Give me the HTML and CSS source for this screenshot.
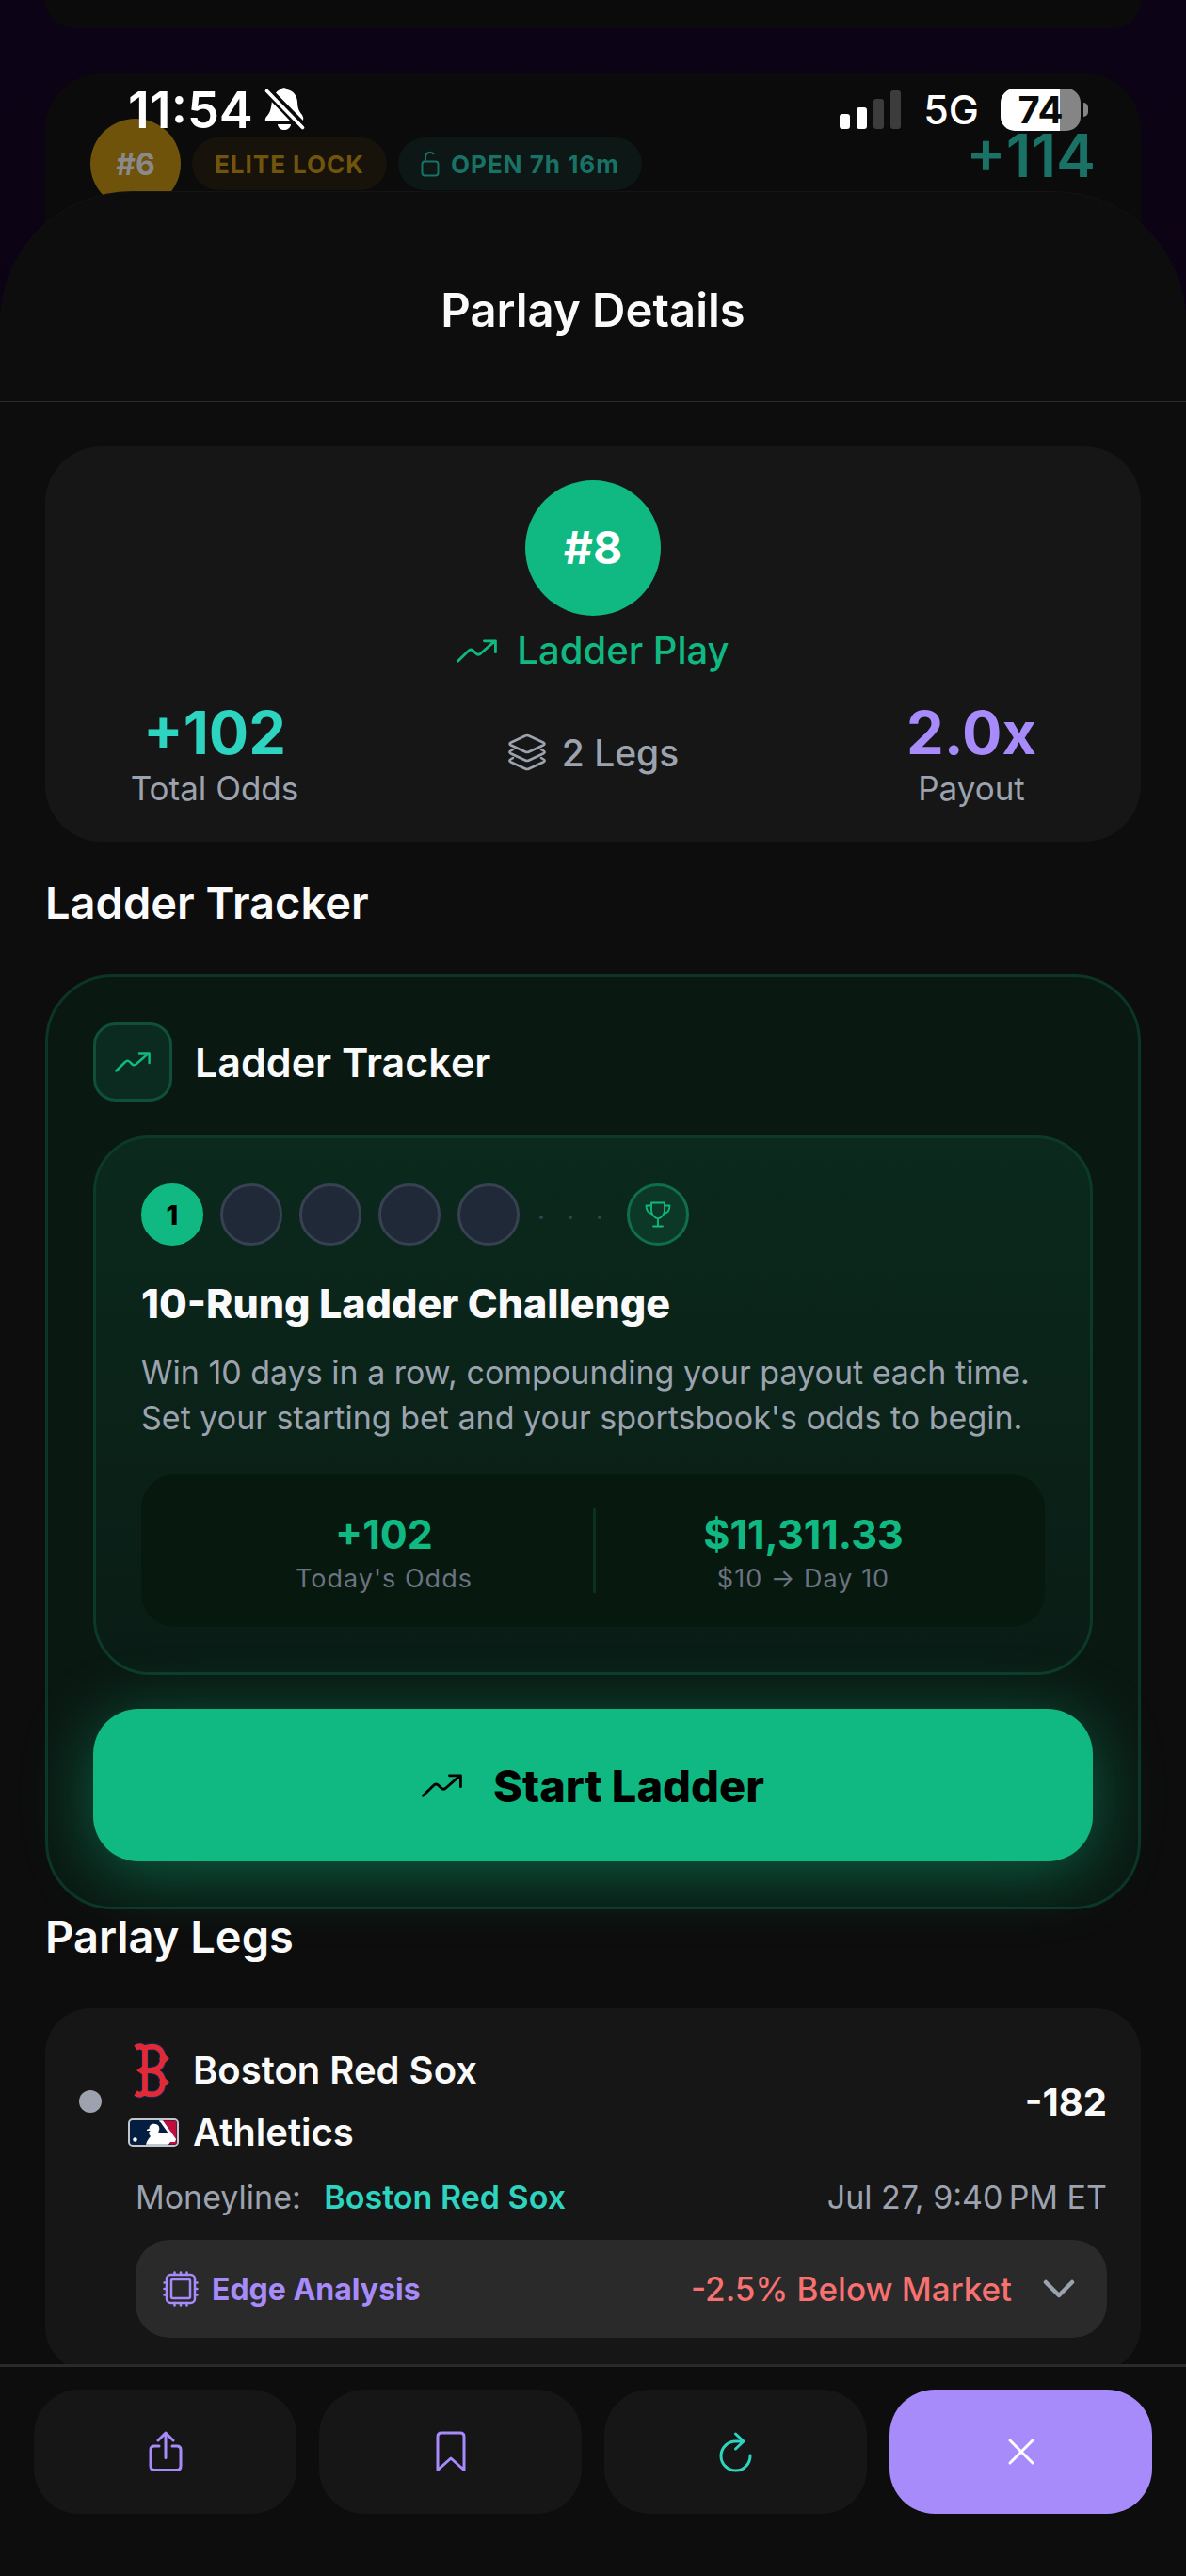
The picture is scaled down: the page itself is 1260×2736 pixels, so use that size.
FILE: index.html
```html
<!DOCTYPE html>
<html lang="en">
<head>
    <meta charset="UTF-8">
    <meta name="viewport" content="width=device-width, initial-scale=1.0">
    <title>Parlay Details</title>
    <link rel="stylesheet" href="styles.css">
</head>
<body>
    <!-- Shared icon shapes -->
    <svg class="sprite" aria-hidden="true">
        <symbol id="trend" viewBox="0 0 38 22">
            <path d="M1.3 20.5 L11 11 Q13.5 8.4 16 11 L18 13 Q20.5 15.6 23 13 L36 1.6 M26 1.6 H36.6 V12" fill="none" stroke="currentColor" stroke-width="2.5" stroke-linecap="round" stroke-linejoin="round"/>
        </symbol>
    </svg>

    <div class="app">
        <!-- Dimmed page behind the sheet -->
        <div class="backdrop">
            <div class="back-card back-card-prev"></div>
            <div class="back-card back-card-next">
                <span class="back-rank">#6</span>
                <span class="pill pill-gold">ELITE LOCK</span>
                <span class="pill pill-teal">
                    <svg width="20" height="28" viewBox="0 0 20 28" fill="none" stroke="currentColor" stroke-width="2"><rect x="1.5" y="11.5" width="17" height="15" rx="3"/><path d="M5 11 V6 a5 5 0 0 1 9 -2"/></svg>
                    OPEN 7h 16m
                </span>
                <span class="back-odds">+114</span>
            </div>
        </div>

        <div class="status-bar">
            <div class="status-left">
                <span class="time">11:54</span>
                <svg width="44" height="48" viewBox="0 0 44 48">
                    <path fill="#fff" d="M12 6.5 C14 4 16 3.3 17.5 3 C18 0.8 23.5 0.8 24 3 C31 4.5 34.5 9.5 35 16 C35.4 23 36 25 40 30 Q42 33 41 36 Z M8 15 L28 37 H3 C0 37 0.5 34 2 32 C6.5 27.5 7 23 8 15 Z M14 40 H28 C27 48 15 48 14 40 Z"/>
                    <path d="M2 4.5 L41 44.5" stroke="#0b0b0b" stroke-width="8"/>
                    <path d="M2.5 4.5 L40.5 43.5" stroke="#fff" stroke-width="3.6" stroke-linecap="round"/>
                </svg>
            </div>
            <div class="status-right">
                <svg width="66" height="42" viewBox="0 0 66 42">
                    <rect x="0" y="26" width="11" height="16" rx="3" fill="#fff"/>
                    <rect x="18" y="19" width="11" height="23" rx="3" fill="#fff"/>
                    <rect x="36" y="10" width="11" height="32" rx="3" fill="#3c3c3c"/>
                    <rect x="54" y="1" width="11" height="41" rx="3" fill="#3c3c3c"/>
                </svg>
                <span class="network">5G</span>
                <span class="battery">74</span>
            </div>
        </div>

        <main class="sheet">
            <header class="sheet-header">
                <h1>Parlay Details</h1>
            </header>

            <div class="content">
                <section class="summary">
                    <div class="rank">#8</div>
                    <div class="play-type">
                        <svg width="43" height="25"><use href="#trend"/></svg>
                        Ladder Play
                    </div>
                    <div class="summary-stats">
                        <div class="stat">
                            <span class="stat-value teal">+102</span>
                            <span class="stat-label">Total Odds</span>
                        </div>
                        <div class="legs">
                            <svg width="42" height="40" viewBox="0 0 42 40" fill="none" stroke="currentColor" stroke-width="2.6" stroke-linejoin="round" stroke-linecap="round">
                                <path d="M19 2.5 Q21 1.5 23 2.5 L38 9.5 Q41 11 38 12.5 L23 19.5 Q21 20.5 19 19.5 L4 12.5 Q1 11 4 9.5 Z"/>
                                <path d="M6 17 L3.5 18.5 Q1 20 4 21.5 L19 28.5 Q21 29.5 23 28.5 L38 21.5 Q41 20 38.5 18.5 L36 17"/>
                                <path d="M6 26 L3.5 27.5 Q1 29 4 30.5 L19 37.5 Q21 38.5 23 37.5 L38 30.5 Q41 29 38.5 27.5 L36 26"/>
                            </svg>
                            2 Legs
                        </div>
                        <div class="stat">
                            <span class="stat-value purple">2.0x</span>
                            <span class="stat-label">Payout</span>
                        </div>
                    </div>
                </section>

                <h2 class="section-title">Ladder Tracker</h2>

                <section class="tracker">
                    <div class="tracker-header">
                        <span class="tracker-icon"><svg width="38" height="22"><use href="#trend"/></svg></span>
                        <h3>Ladder Tracker</h3>
                    </div>

                    <div class="challenge">
                        <div class="rungs">
                            <span class="rung active">1</span>
                            <span class="rung"></span>
                            <span class="rung"></span>
                            <span class="rung"></span>
                            <span class="rung"></span>
                            <span class="dots"><i></i><i></i><i></i></span>
                            <span class="rung goal">
                                <svg width="28" height="28" viewBox="0 0 28 28" fill="none" stroke="currentColor" stroke-width="1.8" stroke-linecap="round" stroke-linejoin="round">
                                    <path d="M7 1.5 H21 V9 C21 14 18.5 17 14 18.5 C9.5 17 7 14 7 9 Z M14 18.5 V26.5 M9 26.5 H19"/>
                                    <path d="M7 4.5 H1.5 C1.5 9 3 12 7.5 13 M21 4.5 H26.5 C26.5 9 25 12 20.5 13"/>
                                </svg>
                            </span>
                        </div>
                        <h4>10-Rung Ladder Challenge</h4>
                        <p>Win 10 days in a row, compounding your payout each time. Set your starting bet and your sportsbook's odds to begin.</p>
                        <div class="projection">
                            <div class="projection-item">
                                <span class="projection-value">+102</span>
                                <span class="projection-label">Today's Odds</span>
                            </div>
                            <div class="projection-item">
                                <span class="projection-value">$11,311.33</span>
                                <span class="projection-label">$10 → Day 10</span>
                            </div>
                        </div>
                    </div>

                    <button class="start" type="button">
                        <svg width="43" height="25"><use href="#trend"/></svg>
                        Start Ladder
                    </button>
                </section>

                <h2 class="section-title section-title-tight">Parlay Legs</h2>

                <section class="leg">
                    <div class="leg-game">
                        <span class="leg-dot"></span>
                        <div class="teams">
                            <div class="team">
                                <svg class="logo" viewBox="0 0 54 60">
                                    <g fill="none" stroke-linejoin="round">
                                        <path d="M8 6 Q14 2 18 8 V52 Q14 58 8 54 M18 6 C30 2 37 7 37 17 C37 25 33 29 24 30 H14 M24 30 C33 31 37 35 37 43 C37 53 30 58 18 54" stroke="#0c2340" stroke-width="8.5"/>
                                        <path d="M8 6 Q14 2 18 8 V52 Q14 58 8 54 M18 6 C30 2 37 7 37 17 C37 25 33 29 24 30 H14 M24 30 C33 31 37 35 37 43 C37 53 30 58 18 54" stroke="#e02a37" stroke-width="5.8"/>
                                    </g>
                                    <path fill="#e02a37" d="M38 12 L44 17.5 L38 23 L33 17.5 Z M38 37 L44 42.5 L38 48 L33 42.5 Z M9 30 L16 25 V35 Z"/>
                                </svg>
                                Boston Red Sox
                            </div>
                            <div class="team">
                                <svg class="logo" viewBox="0 0 54 60">
                                    <rect x="1" y="16" width="52" height="28" rx="4" fill="#041e42" stroke="#c3c6ca" stroke-width="2"/>
                                    <path d="M35 17.5 H49 Q51.5 17.5 51.5 20 V40 Q51.5 42.5 49 42.5 H45 Z" fill="#bf0d3e"/>
                                    <path d="M33 17.2 H37 L51 37 L50 40 H45 L43 42.8 H19 C20 39 22 36 24 34 C21.5 31 22 29 24 28 H20 V26.8 L22.5 26 C22.5 21 27 19.5 31 21.5 C34 23.5 34 27 32 29.5 L40 31 Z" fill="#fff"/>
                                    <path d="M34.5 19 L43 31 L40.5 31 L33 29.5 C34.5 26 34 22.5 31.500 21 Z" fill="#041e42"/>
                                    <circle cx="7.5" cy="37.5" r="2.2" fill="#fff"/>
                                </svg>
                                Athletics
                            </div>
                        </div>
                        <span class="leg-odds">-182</span>
                    </div>

                    <div class="leg-body">
                        <div class="leg-meta">
                            <span>Moneyline: <strong>Boston Red Sox</strong></span>
                            <time>Jul 27, 9:40&#8239;PM ET</time>
                        </div>
                        <button class="edge" type="button">
                            <svg width="38" height="38" viewBox="0 0 38 38" fill="none" stroke="currentColor" stroke-width="2.5" stroke-linecap="round">
                                <rect x="4" y="4" width="30" height="30" rx="4.5"/>
                                <rect x="9" y="9" width="20" height="20" rx="1.5"/>
                                <path d="M12.5 4 V1.5 M19 4 V1.5 M25.5 4 V1.5 M12.5 34 V36.5 M19 34 V36.5 M25.5 34 V36.5 M4 12.5 H1.5 M4 19 H1.5 M4 25.5 H1.5 M34 12.5 H36.5 M34 19 H36.5 M34 25.5 H36.5"/>
                            </svg>
                            <span class="edge-title">Edge Analysis</span>
                            <span class="edge-value">-2.5% Below Market</span>
                            <svg class="chevron" width="34" height="20" viewBox="0 0 34 20" fill="none" stroke="currentColor" stroke-width="4.5" stroke-linecap="round" stroke-linejoin="round"><path d="M3 3 L17 17 L31 3"/></svg>
                        </button>
                    </div>
                </section>
            </div>

            <footer class="actions">
                <button type="button" aria-label="Share">
                    <svg width="36" height="44" viewBox="0 0 36 44" fill="none" stroke="currentColor" stroke-width="3" stroke-linecap="round" stroke-linejoin="round">
                        <path d="M11 16 H6 Q2 16 2 20 V37 Q2 41.5 6 41.5 H30 Q34 41.5 34 37 V20 Q34 16 30 16 H25 M18 28.5 V2 M10 10 L18 2 L26 10"/>
                    </svg>
                </button>
                <button type="button" aria-label="Save">
                    <svg width="32" height="44" viewBox="0 0 32 44" fill="none" stroke="currentColor" stroke-width="3" stroke-linecap="round" stroke-linejoin="round">
                        <path d="M2 41.5 V6 Q2 2 6 2 H26 Q30 2 30 6 V41.5 L16 29 Z"/>
                    </svg>
                </button>
                <button class="refresh" type="button" aria-label="Refresh">
                    <svg width="36" height="44" viewBox="0 0 36 44" fill="none" stroke="currentColor" stroke-width="3" stroke-linecap="round" stroke-linejoin="round">
                        <path d="M33 26 A15.5 15.5 0 1 1 17.5 11 H25 M17.5 3 L26 11 L17.5 19"/>
                    </svg>
                </button>
                <button class="close" type="button" aria-label="Close">
                    <svg width="30" height="30" viewBox="0 0 30 30" fill="none" stroke="currentColor" stroke-width="3" stroke-linecap="round"><path d="M3 3 L27 27 M27 3 L3 27"/></svg>
                </button>
            </footer>
        </main>
    </div>
</body>
</html>
```

FILE: styles.css
```css
* {
    box-sizing: border-box;
}

body {
    margin: 0;
    background-color: #0d0d0d;
    color: #fafafa;
    font-family: Inter, 'Liberation Sans', sans-serif;
}

h1, h2, h3, h4, p {
    margin: 0;
}

button {
    border: none;
    font-family: inherit;
    cursor: pointer;
}

svg {
    flex-shrink: 0;
}

.sprite {
    position: absolute;
    width: 0;
    height: 0;
}

.app {
    position: relative;
    display: flex;
    flex-direction: column;
    height: 100vh;
    padding-top: 204px;
    overflow: hidden;
}

/* Page behind the sheet */
.backdrop {
    position: absolute;
    inset: 0 0 auto;
    height: 420px;
    padding: 0 48px;
    background: linear-gradient(#0c0416, #0c0214);
}

.back-card {
    background-color: #0b0b0b;
    border-radius: 60px;
}

.back-card-prev {
    height: 30px;
    margin-bottom: 48px;
    border-radius: 0 0 60px 60px;
}

.back-card-next {
    display: flex;
    align-items: flex-start;
    gap: 12px;
    height: 340px;
    padding: 48px;
}

.back-rank {
    display: flex;
    align-items: center;
    justify-content: center;
    width: 96px;
    height: 96px;
    border-radius: 50%;
    background-color: #6f530b;
    color: #8a8a8a;
    font-size: 32px;
    font-weight: 700;
}

.pill {
    display: flex;
    align-items: center;
    gap: 12px;
    height: 56px;
    margin-top: 20px;
    padding: 0 24px;
    border-radius: 28px;
    font-size: 26px;
    font-weight: 700;
    letter-spacing: 1px;
}

.pill-gold {
    background-color: #17130b;
    color: #72550c;
}

.pill-teal {
    background-color: #0c1716;
    color: #197265;
}

.back-odds {
    margin-left: auto;
    color: #197265;
    font-size: 63px;
    font-weight: 600;
    line-height: 78px;
}

/* Status bar */
.status-bar {
    position: absolute;
    inset: 84px 112px auto 136px;
    display: flex;
    align-items: center;
    justify-content: space-between;
    height: 64px;
    color: #fff;
}

.status-left,
.status-right {
    display: flex;
    align-items: center;
}

.status-left {
    gap: 12px;
}

.status-right {
    gap: 23px;
}

.time {
    font-size: 54px;
    font-weight: 600;
}

.network {
    font-size: 43px;
    font-weight: 500;
}

.battery {
    position: relative;
    width: 85px;
    height: 45px;
    border-radius: 15px;
    background: linear-gradient(90deg, #fff 74%, #858585 74%);
    color: #0b0b0b;
    font-size: 40px;
    font-weight: 700;
    line-height: 45px;
    text-align: center;
}

.battery::after {
    content: '';
    position: absolute;
    top: 15px;
    right: -8px;
    width: 5px;
    height: 15px;
    border-radius: 0 5px 5px 0;
    background-color: #858585;
}

/* Sheet */
.sheet {
    position: relative;
    flex: 1;
    min-height: 0;
    display: flex;
    flex-direction: column;
    background-color: #0d0d0d;
    border-radius: 140px 140px 0 0;
    box-shadow: 0 -1px 0 #141414;
}

.sheet-header {
    padding: 94px 48px 64px;
    border-bottom: 1px solid #2a2a2a;
    text-align: center;
}

.sheet-header h1 {
    font-size: 49px;
    font-weight: 600;
    line-height: 64px;
}

.content {
    flex: 1;
    min-height: 0;
    padding: 47px 48px 0;
    overflow: hidden;
}

/* Summary card */
.summary {
    display: flex;
    flex-direction: column;
    align-items: center;
    padding: 36px;
    border-radius: 60px;
    background-color: #161616;
}

.rank {
    width: 144px;
    height: 144px;
    border-radius: 50%;
    background-color: #10b981;
    color: #fff;
    font-size: 48px;
    font-weight: 700;
    line-height: 144px;
    text-align: center;
}

.play-type {
    display: flex;
    align-items: center;
    gap: 21px;
    margin: 12px 0 24px;
    color: #10b981;
    font-size: 40px;
    font-weight: 500;
    line-height: 50px;
}

.summary-stats {
    display: grid;
    grid-template-columns: 288px 1fr 288px;
    align-items: center;
    width: 100%;
}

.stat {
    display: flex;
    flex-direction: column;
    align-items: center;
}

.stat-value {
    font-size: 63px;
    font-weight: 700;
    line-height: 76px;
}

.teal {
    color: #2dd4bf;
}

.purple {
    color: #a78bfa;
}

.stat-label {
    color: #9ca3af;
    font-size: 35px;
    line-height: 42px;
}

.legs {
    display: flex;
    align-items: center;
    justify-content: center;
    gap: 16px;
    color: #9ca3af;
    font-size: 39px;
    font-weight: 500;
}

.section-title {
    margin: 36px 0 48px;
    font-size: 47px;
    font-weight: 600;
    line-height: 57px;
}

.section-title-tight {
    position: relative;
    margin-top: 0;
}

/* Ladder tracker */
.tracker {
    padding: 48px;
    border: 3px solid #0c3526;
    border-radius: 72px;
    background-color: #0a1812;
}

.tracker-header {
    display: flex;
    align-items: center;
    gap: 24px;
    margin-bottom: 36px;
}

.tracker-header h3 {
    font-size: 43px;
    font-weight: 600;
}

.tracker-icon {
    display: flex;
    align-items: center;
    justify-content: center;
    width: 84px;
    height: 84px;
    border: 3px solid #0e5039;
    border-radius: 24px;
    background-color: #0c2b20;
    color: #10b981;
}

.challenge {
    margin-bottom: 36px;
    padding: 48px;
    border: 3px solid #0c3a29;
    border-radius: 60px;
    background: linear-gradient(#0b291d, #0a1c15);
}

.rungs {
    display: flex;
    gap: 18px;
    margin-bottom: 36px;
}

.rung {
    display: flex;
    align-items: center;
    justify-content: center;
    width: 66px;
    height: 66px;
    border: 3px solid #374151;
    border-radius: 50%;
    background-color: #1f2937;
    font-size: 29px;
    font-weight: 800;
}

.rung.active {
    border-color: #10b981;
    background-color: #10b981;
    color: #000;
}

.rung.goal {
    border-color: #0f6e4e;
    background-color: #0c3828;
    color: #10b981;
}

.dots {
    display: flex;
    align-items: center;
    gap: 27px;
    width: 78px;
    padding: 6px 0 0 3px;
}

.dots i {
    width: 4px;
    height: 4px;
    border-radius: 50%;
    background-color: #374151;
}

.challenge h4 {
    margin-bottom: 24px;
    font-size: 43px;
    font-weight: 800;
    line-height: 51px;
}

.challenge p {
    margin-bottom: 36px;
    color: #9ca3af;
    font-size: 34px;
    line-height: 48px;
}

.projection {
    display: grid;
    grid-template-columns: 1fr 1fr;
    padding: 36px;
    border-radius: 36px;
    background-color: #07180f;
}

.projection-item {
    display: flex;
    flex-direction: column;
    align-items: center;
    gap: 6px;
}

.projection-item + .projection-item {
    border-left: 3px solid #0b3023;
}

.projection-value {
    color: #10b981;
    font-size: 43px;
    font-weight: 700;
    line-height: 54px;
}

.projection-label {
    color: #6b7280;
    font-size: 27px;
    line-height: 30px;
    letter-spacing: 1px;
}

.start {
    display: flex;
    align-items: center;
    justify-content: center;
    gap: 33px;
    width: 100%;
    height: 162px;
    border-radius: 48px;
    background-color: #10b981;
    box-shadow: 0 12px 72px rgba(16, 185, 129, 0.45);
    color: #000;
    font-size: 47px;
    font-weight: 800;
}

/* Parlay leg */
.leg {
    padding: 36px;
    border-radius: 48px;
    background-color: #161616;
}

.leg-game {
    display: flex;
    align-items: center;
}

.leg-dot {
    width: 24px;
    height: 24px;
    margin-right: 28px;
    border-radius: 50%;
    background-color: #9ca3af;
}

.teams {
    display: flex;
    flex-direction: column;
    gap: 6px;
}

.team {
    display: flex;
    align-items: center;
    gap: 15px;
    font-size: 40px;
    font-weight: 600;
    line-height: 60px;
}

.logo {
    width: 54px;
    height: 60px;
}

.leg-odds {
    margin-left: auto;
    font-size: 40px;
    font-weight: 700;
}

.leg-body {
    padding: 15px 0 0 60px;
}

.leg-meta {
    display: flex;
    justify-content: space-between;
    margin-bottom: 21px;
    color: #9ca3af;
    font-size: 34px;
    line-height: 48px;
}

.leg-meta strong {
    margin-left: 15px;
    color: #2dd4bf;
    font-weight: 600;
}

.edge {
    display: flex;
    align-items: center;
    width: 100%;
    height: 104px;
    padding: 0 34px 0 29px;
    border-radius: 36px;
    background-color: #2a2a2a;
    color: #a78bfa;
}

.edge-title {
    margin-left: 14px;
    font-size: 32px;
    font-weight: 700;
}

.edge-value {
    margin-left: auto;
    color: #f87171;
    font-size: 35px;
    font-weight: 500;
}

.chevron {
    margin-left: 33px;
    color: #9ca3af;
}

/* Bottom actions */
.actions {
    display: grid;
    grid-template-columns: repeat(4, 1fr);
    gap: 24px;
    padding: 24px 36px 66px;
    border-top: 3px solid #2a2a2a;
    background-color: #0d0d0d;
}

.actions button {
    display: flex;
    align-items: center;
    justify-content: center;
    height: 132px;
    border-radius: 48px;
    background-color: #161616;
    color: #a78bfa;
}

.actions .refresh {
    color: #2dd4bf;
}

.actions .close {
    background-color: #a78bfa;
    color: #fff;
}
```
